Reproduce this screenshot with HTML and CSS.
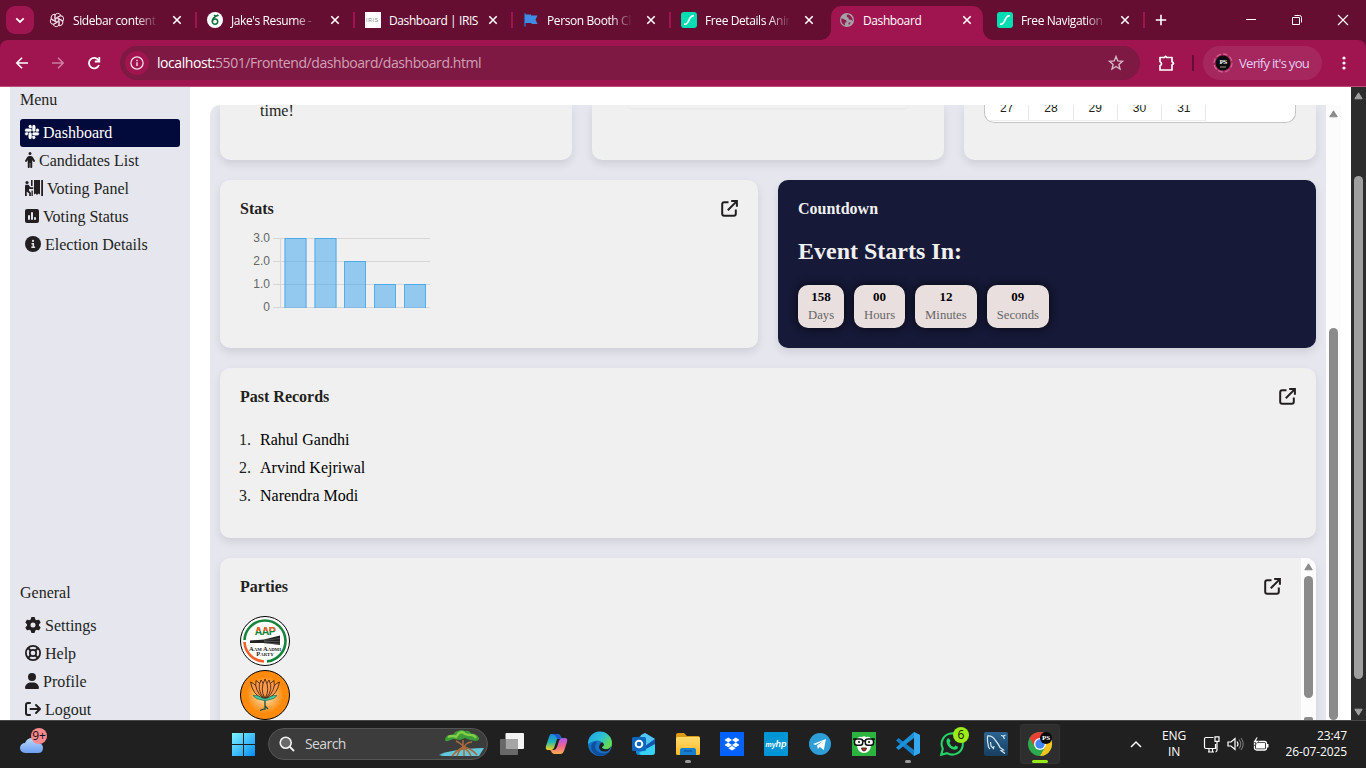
FILE: index.html
```html
<!DOCTYPE html>
<html lang="en">
<head>
<meta charset="utf-8">
<title>Dashboard</title>
<link rel="stylesheet" href="styles.css">
</head>
<body>
<svg class="defs" width="0" height="0">
  <defs>
    <symbol id="close" viewBox="0 0 10 10"><path d="M1.3 1.3l7.4 7.4M8.7 1.3L1.3 8.7" stroke="#fff" stroke-width="1.6"/></symbol>
    <symbol id="lottie" viewBox="0 0 16 16"><rect width="16" height="16" rx="3" fill="#00ddb3"/><path d="M3.8 12.2C9 12.2 7 3.8 12.2 3.8" fill="none" stroke="#fff" stroke-width="1.7" stroke-linecap="round"/></symbol>
    <symbol id="external" viewBox="0 0 17 17"><path d="M7.5 2.2H3.2Q1.2 2.2 1.2 4.2v9.6q0 2 2 2h9.6q2 0 2-2V9.5M10.2 1.1h5.7v5.7M15.6 1.4L6.8 10.2" fill="none" stroke="#231f20" stroke-width="2"/></symbol>
    <symbol id="up" viewBox="0 0 9 8"><path d="M4.5.8L8.2 6.8H.8z" fill="currentColor" stroke="currentColor" stroke-linejoin="round"/></symbol>
    <linearGradient id="win" x2="1" y2="1"><stop stop-color="#7ef4ff"/><stop offset="1" stop-color="#078cf8"/></linearGradient>
    <linearGradient id="cloud" x2="0" y2="1"><stop stop-color="#b9d8ff"/><stop offset="1" stop-color="#6c9fef"/></linearGradient>
    <linearGradient id="copA" x2="0" y2="1"><stop stop-color="#1787e8"/><stop offset=".5" stop-color="#23b6b0"/><stop offset="1" stop-color="#f6d41c"/></linearGradient>
    <linearGradient id="copB" x2="0" y2="1"><stop stop-color="#a85af0"/><stop offset=".5" stop-color="#ef6390"/><stop offset="1" stop-color="#ffab4b"/></linearGradient>
    <linearGradient id="edge" x2="1" y2=".6"><stop stop-color="#1c9fe8"/><stop offset=".55" stop-color="#2bc0d8"/><stop offset="1" stop-color="#66dc4c"/></linearGradient>
    <linearGradient id="fold" x2="0" y2="1"><stop stop-color="#ffdb6c"/><stop offset="1" stop-color="#fbb924"/></linearGradient>
    <linearGradient id="sql" x2="0" y2="1"><stop stop-color="#2b6492"/><stop offset="1" stop-color="#173f60"/></linearGradient>
    <radialGradient id="saffron"><stop offset=".2" stop-color="#ffd39b"/><stop offset=".75" stop-color="#ff8a0c"/></radialGradient>
  </defs>
</svg>

<header class="browser">
  <div class="tabstrip">
    <div class="tab-search"><svg width="10" height="7" viewBox="0 0 10 7"><path d="M1.3 1.4L5 5l3.7-3.6" fill="none" stroke="#fff" stroke-width="1.8"/></svg></div>
    <div class="tab">
      <svg class="fav" viewBox="0 0 16 16"><g fill="none" stroke="#eed9e2" stroke-width="1"><path id="petal" d="M6 9V4Q6.200 1.300 8.800 1.300Q10.900 1.400 11.800 3.300L8 5.700V7"/><use href="#petal" transform="rotate(60 8 8)"/><use href="#petal" transform="rotate(120 8 8)"/><use href="#petal" transform="rotate(180 8 8)"/><use href="#petal" transform="rotate(240 8 8)"/><use href="#petal" transform="rotate(300 8 8)"/></g></svg>
      <span class="title">Sidebar content</span><svg class="x"><use href="#close"/></svg>
    </div>
    <div class="tab">
      <svg class="fav" viewBox="0 0 16 16"><circle cx="8" cy="8" r="8" fill="#fff"/><circle cx="8" cy="9.600" r="2.700" fill="none" stroke="#13703c" stroke-width="1.500"/><path d="M5.400 9.500Q5.200 5.500 10.700 3.200M7 3.200Q9 4.800 11.500 3" fill="none" stroke="#13703c" stroke-width="1.600"/></svg>
      <span class="title">Jake's Resume -</span><svg class="x"><use href="#close"/></svg>
    </div>
    <div class="tab">
      <svg class="fav" viewBox="0 0 16 16"><path fill="#fff" d="M0 0h16v16H0z"/><text x="1" y="9.500" class="iris">IRIS</text></svg>
      <span class="title whole">Dashboard | IRIS</span><svg class="x"><use href="#close"/></svg>
    </div>
    <div class="tab">
      <svg class="fav" viewBox="0 0 16 16"><path d="M2 1.300V14.500" stroke="#3268b8" stroke-width="1.600"/><path d="M2 2.500h6v1h6.500l-2 4.300 2 4.200H8.500v-1H2z" fill="#408ce4"/></svg>
      <span class="title">Person Booth Cla</span><svg class="x"><use href="#close"/></svg>
    </div>
    <div class="tab">
      <svg class="fav"><use href="#lottie"/></svg>
      <span class="title">Free Details Anim</span><svg class="x"><use href="#close"/></svg>
    </div>
    <div class="tab active">
      <svg class="fav small" viewBox="0 0 16 16"><circle cx="8" cy="8" r="7.500" fill="#a6a0a8"/><path d="M2.200 6.200L6.500 8q1.500.8 1 2.500l-1.800.5v2.800Q2 12 1.800 8zM9 2l-1.500 1.500q0 1.800 2 1.800l.5 2.200 2.500.3 1.700 1.400Q14 4 9 2zM9.500 11l2.500-.5-2 3z" fill="#8f1a4b"/></svg>
      <span class="title whole">Dashboard</span><svg class="x"><use href="#close"/></svg>
    </div>
    <div class="tab">
      <svg class="fav"><use href="#lottie"/></svg>
      <span class="title">Free Navigation</span><svg class="x"><use href="#close"/></svg>
    </div>
    <svg class="newtab" width="12" height="12" viewBox="0 0 12 12"><path d="M6 .8v10.400M.8 6h10.400" stroke="#fff" stroke-width="1.600"/></svg>
    <div class="winctl">
      <svg width="12" height="12" viewBox="0 0 12 12"><path d="M1 5.500h10" stroke="#fff"/></svg>
      <svg width="12" height="12" viewBox="0 0 12 12"><path d="M1.500 3.500h7v7h-7zM3.500 1.500h5q2 0 2 2v5" fill="none" stroke="#fff"/></svg>
      <svg width="12" height="12" viewBox="0 0 12 12"><path d="M1 1l10 10M11 1L1 11" stroke="#fff" stroke-width="1.100"/></svg>
    </div>
  </div>
  <div class="toolbar">
    <svg class="nav" viewBox="0 0 16 16"><path d="M14 8H3M8 2.800L2.800 8 8 13.200" fill="none" stroke="#fff" stroke-width="1.600"/></svg>
    <svg class="nav dim" viewBox="0 0 16 16"><path d="M2 8h11M8 2.800L13.200 8 8 13.200" fill="none" stroke="#fff" stroke-width="1.600"/></svg>
    <svg class="nav" viewBox="0 0 16 16"><path d="M13 10a5.200 5.200 0 1 1-.4-4.600M13.300 2v4.500H8.800" fill="none" stroke="#fff" stroke-width="1.800"/></svg>
    <div class="omnibox">
      <div class="info"><svg width="14" height="14" viewBox="0 0 14 14"><circle cx="7" cy="7" r="6.100" fill="none" stroke="#f5dfe8" stroke-width="1.300"/><path d="M7 6.200V10M7 3.700v1.500" stroke="#f5dfe8" stroke-width="1.400"/></svg></div>
      <span class="url"><b>localhost:</b>5501/Frontend/dashboard/dashboard.html</span>
      <svg class="star" width="16" height="16" viewBox="0 0 16 16"><path d="M8 1.600l1.800 4.300 4.700.4-3.600 3.100 1.100 4.600L8 11.500l-4 2.500 1.100-4.600L1.500 6.300l4.700-.4z" fill="none" stroke="#d8b6c5" stroke-width="1.400"/></svg>
    </div>
    <svg class="puzzle" width="18" height="18" viewBox="0 0 18 18"><path d="M2 3.500h4.500q1-2.300 2.300 0H14v4.300q3 1.500 0 3V16H2v-4.200q3-2 0-4.200z" fill="none" stroke="#fff" stroke-width="1.700" stroke-linejoin="round"/></svg>
    <i class="tool-sep"></i>
    <div class="profile">
      <svg width="20" height="20" viewBox="0 0 20 20"><circle cx="10" cy="10" r="9" fill="none" stroke="#cf5f8e" stroke-width="1.300" stroke-dasharray="5 2"/><circle cx="10" cy="10" r="7.500" fill="#0b0b0b"/><text x="10" y="11" text-anchor="middle" class="ps">PS</text><path d="M7 14h6" stroke="#999"/></svg>
      <span>Verify it's you</span>
    </div>
    <svg class="dots" width="4" height="14" viewBox="0 0 4 14"><g fill="#fff"><circle cx="2" cy="2" r="1.600"/><circle cx="2" cy="7" r="1.600"/><circle cx="2" cy="12" r="1.600"/></g></svg>
  </div>
</header>

<div class="viewport">
  <nav class="sidebar">
    <div class="group">
      <h6>Menu</h6>
      <a class="item on"><svg width="14" height="16" viewBox="0 0 448 512"><path d="M94.12 315.1c0 25.9-21.16 47.06-47.06 47.06S0 341 0 315.1c0-25.9 21.16-47.06 47.06-47.06h47.06v47.06zm23.72 0c0-25.9 21.16-47.06 47.06-47.06s47.06 21.16 47.06 47.06v117.84c0 25.9-21.16 47.06-47.06 47.06s-47.06-21.16-47.06-47.06V315.1zm47.06-188.98c-25.9 0-47.06-21.16-47.06-47.06S139 32 164.9 32s47.06 21.16 47.06 47.06v47.06H164.9zm0 23.72c25.9 0 47.06 21.16 47.06 47.06s-21.16 47.06-47.06 47.06H47.06C21.16 243.96 0 222.8 0 196.9s21.16-47.06 47.06-47.06H164.9zm188.98 47.06c0-25.9 21.16-47.06 47.06-47.06 25.9 0 47.06 21.16 47.06 47.06s-21.16 47.06-47.06 47.06h-47.06V196.9zm-23.72 0c0 25.9-21.16 47.06-47.06 47.06-25.9 0-47.06-21.16-47.06-47.06V79.06c0-25.9 21.16-47.06 47.06-47.06 25.9 0 47.06 21.16 47.06 47.06V196.9zM283.1 385.88c25.9 0 47.06 21.16 47.06 47.06 0 25.9-21.16 47.06-47.06 47.06-25.9 0-47.06-21.16-47.06-47.06v-47.06h47.06zm0-23.72c-25.9 0-47.06-21.16-47.06-47.06 0-25.9 21.16-47.06 47.06-47.06h117.84c25.9 0 47.06 21.16 47.06 47.06 0 25.9-21.16 47.06-47.06 47.06H283.1z" stroke="#fff" stroke-width="10"/></svg>Dashboard</a>
      <a class="item"><svg width="10" height="16" viewBox="0 0 320 512"><path d="M112 48a48 48 0 1 1 96 0 48 48 0 1 1 -96 0zm40 304l0 128c0 17.700-14.300 32-32 32s-32-14.300-32-32l0-223.100L59.400 304.500c-9.100 15.100-28.800 20-43.900 10.900s-20-28.800-10.900-43.900l58.300-97c17.400-28.900 48.600-46.600 82.300-46.600l29.700 0c33.700 0 64.900 17.700 82.300 46.600l58.300 97c9.100 15.100 4.200 34.800-10.900 43.900s-34.800 4.200-43.900-10.900L232 256.900 232 480c0 17.700-14.300 32-32 32s-32-14.300-32-32l0-128-16 0z"/></svg>Candidates List</a>
      <a class="item"><svg width="18" height="16" viewBox="0 0 18 16"><circle cx="2" cy="2.500" r="1.600"/><path d="M.5 4.800h3l1.800 2.500h3v1.800H4.500L4 8.500v2.300l1.900 1.900V16H4.200v-2.500L1.700 11.500 1.800 16H0V6zM6 0h1.600v6H6zM6.500 10.500h1.300V16H6.500zM9 0h6v14.500l-1.500-1-1.500 1.500-1.500-1.500L9 14.500zM16.200 0H18v16h-1.800z"/></svg>Voting Panel</a>
      <a class="item"><svg width="14" height="16" viewBox="0 0 448 512"><path fill-rule="evenodd" d="M64 32h320q64 0 64 64v320q0 64-64 64H64q-64 0-64-64V96Q0 32 64 32zM96 256v96q0 32 32 32t32-32v-96q0-32-32-32t-32 32zm96-96v192q0 32 32 32t32-32V160q0-32-32-32t-32 32zm96 160v32q0 32 32 32t32-32v-32q0-32-32-32t-32 32z"/></svg>Voting Status</a>
      <a class="item"><svg width="16" height="16" viewBox="0 0 16 16"><circle cx="8" cy="8" r="8"/><circle cx="8" cy="4.900" r="1.100" fill="#e6e6ef"/><path d="M6.500 7.700H8.300v3.600M6.300 11.300h3.800" fill="none" stroke="#e6e6ef" stroke-width="1.500"/></svg>Election Details</a>
    </div>
    <div class="group">
      <h6>General</h6>
      <a class="item"><svg width="16" height="16" viewBox="0 0 512 512"><path d="M495.900 166.600c3.200 8.700 .5 18.400-6.400 24.600l-43.300 39.400c1.100 8.300 1.700 16.800 1.700 25.400s-.6 17.100-1.700 25.400l43.300 39.400c6.900 6.200 9.600 15.900 6.400 24.600c-4.400 11.900-9.700 23.300-15.800 34.300l-4.700 8.100c-6.600 11-14 21.400-22.100 31.200c-5.900 7.200-15.700 9.600-24.500 6.800l-55.700-17.700c-13.400 10.300-28.200 18.900-44 25.400l-12.500 57.100c-2 9.100-9 16.300-18.200 17.800c-13.800 2.300-28 3.500-42.500 3.500s-28.700-1.200-42.500-3.500c-9.200-1.500-16.200-8.700-18.200-17.800l-12.500-57.100c-15.800-6.500-30.600-15.100-44-25.400L83.100 425.900c-8.800 2.800-18.600 .3-24.500-6.800c-8.100-9.800-15.500-20.200-22.100-31.200l-4.700-8.100c-6.100-11-11.400-22.400-15.800-34.300c-3.200-8.700-.5-18.400 6.400-24.600l43.300-39.400C64.600 273.100 64 264.600 64 256s.6-17.100 1.700-25.400L22.400 191.200c-6.900-6.200-9.600-15.900-6.400-24.600c4.400-11.900 9.700-23.300 15.800-34.300l4.700-8.100c6.600-11 14-21.400 22.100-31.200c5.900-7.200 15.700-9.600 24.500-6.800l55.700 17.700c13.400-10.300 28.200-18.900 44-25.400l12.500-57.100c2-9.100 9-16.300 18.200-17.800C227.300 1.200 241.500 0 256 0s28.700 1.200 42.500 3.500c9.200 1.500 16.200 8.700 18.200 17.800l12.500 57.100c15.800 6.500 30.600 15.100 44 25.400l55.700-17.700c8.800-2.800 18.600-.3 24.500 6.800c8.100 9.800 15.500 20.200 22.100 31.200l4.700 8.100c6.100 11 11.400 22.400 15.800 34.300zM256 336a80 80 0 1 0 0-160 80 80 0 1 0 0 160z"/></svg>Settings</a>
      <a class="item"><svg width="16" height="16" viewBox="0 0 16 16"><g fill="none" stroke="#231f20"><circle cx="8" cy="8" r="7.100" stroke-width="1.800"/><circle cx="8" cy="8" r="3.200" stroke-width="1.700"/><path d="M2.900 2.900l2.900 2.900M13.100 2.900l-2.900 2.900M2.900 13.100l2.900-2.900M13.100 13.100l-2.900-2.900" stroke-width="2"/></g></svg>Help</a>
      <a class="item"><svg width="14" height="16" viewBox="0 0 448 512"><path d="M224 256A128 128 0 1 0 224 0a128 128 0 1 0 0 256zm-45.700 48C79.800 304 0 383.800 0 482.300C0 498.700 13.300 512 29.700 512l388.600 0c16.400 0 29.700-13.300 29.700-29.700C448 383.800 368.200 304 269.700 304l-91.400 0z"/></svg>Profile</a>
      <a class="item"><svg width="16" height="16" viewBox="0 0 16 16"><path d="M5 2H3Q1 2 1 4v8q0 2 2 2h2M5.500 8h9M11 4l4 4-4 4" fill="none" stroke="#231f20" stroke-width="2" stroke-linecap="round" stroke-linejoin="round"/></svg>Logout</a>
    </div>
  </nav>

  <div class="shell">
    <main class="content">
      <div class="row top">
        <section class="card"><span class="remark">time!</span></section>
        <section class="card"><div class="slip"></div></section>
        <section class="card"><div class="calendar"><span>27</span><span>28</span><span>29</span><span>30</span><span>31</span></div></section>
      </div>
      <div class="row mid">
        <section class="card">
          <div class="head"><h4>Stats</h4><svg class="ext"><use href="#external"/></svg></div>
          <svg class="chart" width="200" height="90" viewBox="240 228 200 90">
            <path d="M273 238.500h157M273 261.500h157M273 284.500h157M273 307.500h157M280.500 238v69" stroke="#d6d6d6"/>
            <g fill="#36a2eb" fill-opacity=".5"><path d="M284.500 238h22v70h-22zM314.500 238h22v70h-22zM344 261h22v47h-22zM374 284h22v24h-22zM404 284h22v24h-22z"/></g>
            <path d="M285 308V238.500h21V308M315 308V238.500h21V308M344.500 308V261.500h21V308M374.500 308V284.500h21V308M404.500 308V284.500h21V308" fill="none" stroke="#36a2eb" stroke-opacity=".7"/>
            <g class="ticks"><text x="270" y="242">3.0</text><text x="270" y="265">2.0</text><text x="270" y="288">1.0</text><text x="270" y="311">0</text></g>
          </svg>
        </section>
        <section class="card dark">
          <div class="head"><h4>Countdown</h4></div>
          <h2>Event Starts In:</h2>
          <div class="timer">
            <div><b>158</b><span>Days</span></div><div><b>00</b><span>Hours</span></div><div><b>12</b><span>Minutes</span></div><div><b>09</b><span>Seconds</span></div>
          </div>
        </section>
      </div>
      <section class="card records">
        <div class="head"><h4>Past Records</h4><svg class="ext"><use href="#external"/></svg></div>
        <ol><li>Rahul Gandhi</li><li>Arvind Kejriwal</li><li>Narendra Modi</li></ol>
      </section>
      <section class="card parties">
        <div class="parties-body">
          <div class="head"><h4>Parties</h4><svg class="ext"><use href="#external"/></svg></div>
          <svg class="logo" viewBox="0 0 50 50"><circle cx="25" cy="25" r="24.500" fill="#fff" stroke="#000"/><g fill="none" stroke-width="2.600"><path d="M4.500 24A20.500 20.500 0 1 1 27 45.400" stroke="#16843c"/><path d="M4.500 26A20.500 20.500 0 0 0 24 45.500" stroke="#f2602b"/></g><text x="25" y="18.500" text-anchor="middle" class="aap" fill="#16843c">AAP</text><text x="25" y="18.500" text-anchor="middle" class="aap aap-top" fill="#f2602b">AAP</text><path d="M10 24.500l14-1 16-4v9.500l-16-2L10 27z" fill="#222"/><path d="M24 24.500l16-2M24 25.500h16M24 27l16 1" stroke="#777" stroke-width=".5"/><text x="25" y="35" text-anchor="middle" class="aap-sub">A<tspan class="sc">AM</tspan> A<tspan class="sc">ADMI</tspan></text><text x="25" y="40" text-anchor="middle" class="aap-sub">P<tspan class="sc">ARTY</tspan></text></svg>
          <svg class="logo" viewBox="0 0 50 50"><circle cx="25" cy="25" r="24.500" fill="url(#saffron)" stroke="#000"/><path d="M25 30v9q-2 0-5 1.500M25 36l3 3" fill="none" stroke="#234b3c" stroke-width="1.300"/><g fill="#ff9a4c" stroke="#4a2412" stroke-width=".9" stroke-linejoin="round"><path d="M22 28Q13 25 10.500 12q6 2 12 14zM28 28q9-3 11.500-16-6 2-12 14z"/><path d="M23 28Q14 20 16 10.500q7 4 9 16zM27 28q9-8 7-17.500-7 4-9 16z"/><path d="M24 28.500Q16 19 21 10q5 6 5 17zM26 28.500Q34 19 29 10q-5 6-5 17z"/><path d="M25 28.500Q19.500 19 25 9q5.500 10 0 19.500z"/></g><path d="M13 25.500q5-.5 7.500 1.500Q25 30.500 29.500 27q2.500-2 7.500-1.500-3 4-7 4-5 2.500-10 0-4 0-7-4z" fill="#42c69b" stroke="#1b5c4a" stroke-width=".6"/></svg>
        </div>
        <div class="scroll"><svg width="9" height="8"><use href="#up"/></svg><i class="thumb"></i><i class="downcap"></i></div>
      </section>
    </main>
    <div class="scroll inner"><svg width="9" height="8"><use href="#up"/></svg><i class="thumb"></i></div>
  </div>

  <div class="scroll page"><svg width="9" height="8"><use href="#up"/></svg><i class="thumb"></i><svg class="flip" width="9" height="8"><use href="#up"/></svg></div>
</div>

<footer class="taskbar">
  <svg class="weather" width="30" height="28" viewBox="0 0 30 28"><path d="M6 25a5 5 0 0 1 0-10q2-5 7-5 6 0 7 5 4 1 4 5 0 5-5 5z" fill="url(#cloud)"/><circle cx="20" cy="8" r="8" fill="#f8888d"/><text x="20" y="12" text-anchor="middle" class="badge">9+</text></svg>
  <svg class="start" width="23" height="23" viewBox="0 0 23 23"><path fill="url(#win)" d="M0 0h11v11H0zM12 0h11v11H12zM0 12h11v11H0zM12 12h11v11H12z"/></svg>
  <div class="search">
    <svg width="16" height="16" viewBox="0 0 16 16"><circle cx="6.700" cy="6.700" r="5.500" fill="#696969" stroke="#f2f2f2" stroke-width="1.600"/><path d="M10.700 10.700L15 15" stroke="#f2f2f2" stroke-width="1.900"/></svg>
    <span>Search</span>
    <svg class="tree" width="46" height="28" viewBox="0 0 46 28"><path d="M0 25q12-6 45-7l-5 8H4z" fill="#63c8dc"/><path d="M24 20q2-5-7-9M24 20q2-8 9-8M24 10v9M24 17q-7 4-11 9M23 18q-4 4-5 8M25 18v8M25 18q5 3 7 8M26 17q8 3 12 8" fill="none" stroke="#a86b3c" stroke-width="1.500"/><path d="M6 9Q8 4 14 5q2-4 5-4 3-2 7 0 5-1 6 3 5-1 8 4 1 2-3 3l-6-1-5-2-5 2-7-1-5 2q-3 1-3-2z" fill="#3d9c37"/><path d="M9 7q5-2 8 0l3-4q4-2 6 1l4 1q5-1 7 3" fill="none" stroke="#83cf46" stroke-width="2.300"/></svg>
  </div>
  <div class="apps">
    <div><svg viewBox="0 0 24 24"><rect x="5.500" y="1" width="18.500" height="16" rx="1" fill="#f4f4f4"/><rect x="0" y="7" width="18" height="16" rx="1" fill="#6e6e6e" fill-opacity=".93"/><path d="M6 7h12v10H6z" fill="#a5a5a5"/></svg></div>
    <div><svg viewBox="0 0 24 24"><path d="M7 2h7q2 0 3 3l1 2h-5l-3 9q-1 2-3 2H4q-3 0-2-4l3-9q1-3 2-3z" fill="url(#copA)"/><path d="M17 22h-7q-2 0-3-3l-1-1h4q2 0 3-3l2-6q1-3 4-3h2q3 0 2 4l-3 9q-1 3-3 3z" fill="url(#copB)"/><path d="M8 2h6q2 0 3 5h-4q-1-4-5-5z" fill="#2158c9"/></svg></div>
    <div><svg viewBox="0 0 24 24"><circle cx="12" cy="12" r="12" fill="#1672c4"/><path d="M0 12A12 12 0 0 1 24 11q0 6-6 6-5 0-4-3 1-3-2-5-5-2-12 3z" fill="url(#edge)"/><path d="M9 10q-4 5 0 9 5 4 12 1-3 4-9 4Q3 22 3 14q2-5 6-4z" fill="#124e9e"/><path d="M14 10q4 3 0 5 0 3 6 2 2-1 3-3-1 4-3 5-8 2-9-4 0-3 3-5z" fill="#202020"/></svg></div>
    <div><svg viewBox="0 0 24 24"><path d="M4 7l9-6 10 6v13q0 3-3 3H7q-3 0-3-3z" fill="#1688d9"/><path d="M9 3l4-2 10 6-10 7-6-4z" fill="#51c5f3"/><path d="M23 7L12 15l11 7z" fill="#1155af"/><path d="M7 21l16-9v8q0 3-3 3H9z" fill="#39d0f5"/><rect x="0" y="5" width="14" height="14" rx="1.500" fill="#0c67bf"/><circle cx="7" cy="12" r="3.300" fill="none" stroke="#fff" stroke-width="2"/></svg></div>
    <div class="run"><svg viewBox="0 0 24 24"><path d="M0 3q0-2 2-2h6l3 3h11q2 0 2 2v3H0z" fill="#de9a13"/><rect y="5" width="24" height="18" rx="1.500" fill="url(#fold)"/><path d="M4 23v-5q0-2 2-2h12q2 0 2 2v5z" fill="#147fd1"/><path d="M8 19h8" stroke="#0c5ba5" stroke-width="1.500"/></svg></div>
    <div><svg viewBox="0 0 24 24"><path fill="#0062ff" d="M0 0h24v24H0z"/><path fill="#fff" d="M8.200 5.500L12 8 8.200 10.400 4.500 8zM15.800 5.500L19.500 8l-3.700 2.400L12 8zM8.200 10.500l3.800 2.400-3.800 2.400-3.700-2.400zM15.800 10.500l3.700 2.400-3.700 2.400-3.800-2.400zM12 13.800l3.700 2.400L12 18.600l-3.700-2.400z"/></svg></div>
    <div><svg viewBox="0 0 24 24"><rect width="24" height="24" rx="1" fill="#0096d6"/><text x="12" y="15" text-anchor="middle" class="myhp">my<tspan class="hp">hp</tspan></text></svg></div>
    <div><svg viewBox="0 0 24 24"><circle cx="12" cy="12" r="11" fill="#2d9ed6"/><path d="M5 12l13-5-2.200 11-4-3-2 2-.8-3.500 6-4.500-7.500 4z" fill="#fff"/></svg></div>
    <div><svg viewBox="0 0 24 24"><path fill="#2bb43f" d="M0 0h24v24H0z"/><path d="M5 7q2-3 5-2l2-1 2 1q4-1 5 2v7q-1 7-7 7t-7-7z" fill="#fff"/><g fill="#fff" stroke="#111" stroke-width="1.500"><rect x="2.500" y="7" width="8.200" height="6.300" rx="2.500"/><rect x="13.300" y="7" width="8.200" height="6.300" rx="2.500"/><path d="M10.500 9h3M1 7h3M20 7h3" fill="none"/></g><circle cx="7" cy="10" r="1" fill="#111"/><circle cx="17" cy="10" r="1" fill="#111"/><path d="M9.500 16h5q-.5 3-2.500 3t-2.500-3z" fill="#d52c26" stroke="#111" stroke-width=".8"/></svg></div>
    <div class="run"><svg viewBox="0 0 24 24"><path d="M18 0l6 3v18l-6 3L0 8.500 2.500 6 18 18z" fill="#147fc8"/><path d="M18 0v6L2.500 18 0 15.500z" fill="#1b91dc"/><path d="M18 0l6 3v18l-6 3z" fill="#35a7f0"/></svg></div>
    <div><svg viewBox="0 0 24 24"><path d="M1.200 22.800l1.600-6A10.600 10.600 0 1 1 7 21.200z" fill="#202020" stroke="#25d366" stroke-width="2.100"/><path d="M7 7q2-2 3 1l.5 1-1 2q1 3 4.500 4l1.500-1.500 2.500 1.300q0 3-3.500 3Q8 17 6.500 10 6.400 8 7 7z" fill="#25d366"/><circle cx="21" cy="3" r="8" fill="#9bec18"/><text x="21" y="7.300" text-anchor="middle" class="badge">6</text></svg></div>
    <div><svg viewBox="0 0 24 24"><rect width="24" height="24" rx="2" fill="url(#sql)"/><path d="M6 17l-1.500-2Q3 9 3.500 4q5-.5 8 4.500 3 3.500 4.500 7l3.500 2.500-2.500.5 4 3M6.500 10l.5 4 2.500 2.500L10 14M17 3.500l2 .5 1.500 3M21.500 3L19 4.500" fill="none" stroke="#d7e7f0" stroke-width="1.200"/></svg></div>
    <div class="current"><svg viewBox="0 0 24 24"><circle cx="12" cy="12" r="12" fill="#2da94f"/><path d="M1.600 6A12 12 0 0 1 22.400 6H12L7 15z" fill="#e94235"/><path d="M12 6h10.400A12 12 0 0 1 12 24l5.200-9z" fill="#fcc31e"/><circle cx="12" cy="12" r="6" fill="#fff"/><circle cx="12" cy="12" r="4.700" fill="#4285f4"/><circle cx="18" cy="6" r="6" fill="#080808"/><text x="18" y="7.500" text-anchor="middle" class="ps">PS</text></svg></div>
  </div>
  <div class="tray">
    <svg class="caret" width="12" height="8" viewBox="0 0 12 8"><path d="M1 7l5-5 5 5" fill="none" stroke="#fff" stroke-width="1.500"/></svg>
    <div class="lang">ENG<br>IN</div>
    <svg class="net" width="17" height="17" viewBox="0 0 17 17"><path d="M10.500 1.500H3q-1.500 0-1.500 1.500v8q0 1.500 1.500 1.500h9.500V8M5 16h6M6 12.500v3.500M9.500 12.500v3.500M12 .8h4v4.500h-4zM14 5.500V14q0 1.500-1.500 2" fill="none" stroke="#fff" stroke-width="1.200"/></svg>
    <svg class="vol" width="17" height="14" viewBox="0 0 17 14"><path d="M1 5h3l4-3.500v11L4 9H1z" fill="none" stroke="#fff" stroke-width="1.200"/><path d="M10 4.500q2 2.500 0 5" fill="none" stroke="#fff" stroke-width="1.200"/><path d="M12 2.500q3.500 4.500 0 9M14 1q4.500 6 0 12" fill="none" stroke="#777" stroke-width="1.100"/></svg>
    <svg class="bat" width="18" height="15" viewBox="0 0 18 15"><rect x="2.500" y="4.500" width="12" height="8.500" rx="2" fill="none" stroke="#fff" stroke-width="1.300"/><rect x="4" y="6" width="9" height="5.500" fill="#fff"/><path d="M15.500 7v3.500" stroke="#fff" stroke-width="2"/><path d="M4.500 0L1 5.500h3L2.500 9l5-5.500H4.500L6 0z" fill="#fff" stroke="#202020" stroke-width=".6"/></svg>
    <div class="clock">23:47<br>26-07-2025</div>
  </div>
</footer>
</body>
</html>
```
FILE: styles.css
```css
* { box-sizing: border-box; }
html, body { height: 100%; margin: 0; overflow: hidden; }
body { display: flex; flex-direction: column; width: 1366px; height: 768px; background: #fff; color: #231f20; font: 16px/18px "Liberation Serif", "Times New Roman", serif; }
svg { display: block; flex: none; overflow: visible; }
.defs { position: absolute; }
h2, h4, h6, ol { margin: 0; padding: 0; }

/* Browser frame */
.browser { flex: none; height: 87px; background: #650e32; color: #fff; font-family: "Open Sans", sans-serif; }
.tabstrip { display: flex; height: 40px; padding-left: 6px; align-items: center; }
.tab-search { display: flex; align-items: center; justify-content: center; width: 28px; height: 28px; margin-right: 4px; border-radius: 9px; background: #a0154f; }
.tab { position: relative; display: flex; align-items: center; flex: none; width: 158px; height: 40px; padding-left: 11px; font-size: 12px; }
.tab::after { content: ""; position: absolute; right: -1px; top: 12px; width: 2px; height: 16px; background: #a0154f; }
.tab:nth-child(6)::after { display: none; }
.fav { width: 16px; height: 16px; }
.title { width: 90px; margin: 0 10px 0 7px; padding: 2px 0 0 1px; white-space: nowrap; letter-spacing: -.4px; -webkit-mask-image: linear-gradient(90deg, #000 72%, transparent 96%); mask-image: linear-gradient(90deg, #000 72%, transparent 96%); }
.title.whole { -webkit-mask-image: none; mask-image: none; }
.x { width: 10px; height: 10px; }
.active > * { z-index: 1; }
.active { z-index: 1; }
.active::before { content: ""; position: absolute; left: 3px; right: 3px; top: 6px; bottom: 0; border-radius: 10px 10px 0 0; background: #a0154f; z-index: 0; }
.active::after { top: auto; bottom: 0; left: -7px; right: -7px; width: auto; height: 10px; background: radial-gradient(circle at 0 0, transparent 9.500px, #a0154f 10px) left / 10px 10px no-repeat, radial-gradient(circle at 100% 0, transparent 9.500px, #a0154f 10px) right / 10px 10px no-repeat; }
.fav.small { transform: scale(.94); }
.newtab { margin-left: 11px; }
.winctl { display: flex; gap: 34px; margin-left: auto; margin-right: 17px; }
.iris { font: 5px "Liberation Sans", sans-serif; letter-spacing: .8px; fill: #888; }
.ps { font: bold 7px "Liberation Serif", serif; fill: #fff; }
.toolbar { display: flex; align-items: center; height: 47px; padding: 0 0 1px 14px; border-bottom: 1px solid #bd4e7b; border-radius: 8px 8px 0 0; background: #a0154f; }
.nav { width: 16px; height: 16px; margin-right: 20px; }
.dim { opacity: .45; }
.omnibox { display: flex; align-items: center; width: 1020px; height: 34px; margin-left: -2px; padding-left: 5px; border-radius: 17px; background: #7d1943; }
.info { display: flex; align-items: center; justify-content: center; width: 24px; height: 24px; border-radius: 50%; background: #a0154f; }
.url { margin-left: 8px; color: #d3a0b6; font-size: 14px; letter-spacing: -.43px; white-space: nowrap; }
.url b { color: #fff; font-weight: 400; }
.star { margin-left: auto; margin-right: 16px; }
.puzzle { margin-left: 18px; }
.tool-sep { width: 2px; height: 16px; margin: 0 10px 0 16px; background: #650e32; }
.profile { display: flex; align-items: center; gap: 6px; width: 119px; height: 34px; margin-left: -1px; padding-left: 10px; border-radius: 17px; background: #a5275d; color: #e4cdf1; font-size: 13px; letter-spacing: -.7px; white-space: nowrap; }
.dots { margin-left: 20px; }

/* Page area */
.viewport { display: flex; height: 633px; flex: none; padding-left: 10px; overflow: hidden; }
.sidebar { display: flex; flex-direction: column; justify-content: space-between; flex: none; width: 180px; height: 637px; padding: 4px 10px 0; background: #e6e6ef; }
h6 { margin-bottom: 10px; font-size: 16px; font-weight: 400; line-height: 18px; }
.item { display: flex; align-items: center; gap: 4px; height: 28px; padding-left: 5px; border-radius: 3px; white-space: nowrap; }
.item svg { fill: #231f20; margin-top: -2px; }
.on { background: #020a3b; color: #fff; }
.on svg { fill: #fff; }
.shell { display: flex; flex: none; width: 1131px; height: 615px; margin: 18px 0 0 20px; border-radius: 10px 0 0; overflow: hidden; background: #e6e6ef; }
.content { display: flex; flex-direction: column; gap: 20px; flex: none; width: 1116px; padding: 0 10px; overflow: hidden; }
.row { display: flex; gap: 20px; flex: none; }
.card { flex: 1; padding: 20px; border-radius: 10px; background: #f0f0f0; box-shadow: 0 4px 8px rgba(0, 0, 0, .1); }
.top { height: 55px; }
.top .card { padding: 0 20px; border-radius: 0 0 10px 10px; }
.remark { display: block; margin: -3px 0 0 20px; }
.slip { height: 3px; margin: 0 16px; border-radius: 0 0 8px 8px; background: #f1f1f1; box-shadow: 0 1px 3px rgba(0, 0, 0, .04); }
.calendar { display: flex; height: 18px; border: 1px solid #c6c6c6; border-top: 0; border-radius: 0 0 10px 10px; overflow: hidden; background: #fff; font: 12px/7px "Liberation Sans", sans-serif; }
.calendar span { width: 44.300px; height: 16px; border-right: 1px solid #e7e7e7; border-bottom: 1px solid #eee; text-align: center; }
.mid { height: 168px; }
.head { display: flex; justify-content: space-between; height: 18px; }
h4 { font-size: 16px; line-height: 18px; }
.ext { width: 17px; height: 17px; margin-top: -.5px; }
.chart { margin-top: 10px; }
.ticks { font: 12px "Liberation Sans", sans-serif; fill: #666; text-anchor: end; }
.card.dark { background: #161937; color: #f0f0f0; }
h2 { margin-top: 19px; font-size: 24px; line-height: 28px; }
.timer { display: flex; gap: 10px; margin-top: 20px; }
.timer div { display: flex; flex-direction: column; align-items: center; height: 43px; padding: 3px 10px; border-radius: 10px; background: #e9dfdf; box-shadow: 0 0 10px rgba(0, 0, 0, .75); color: #000; font-size: 13px; }
.timer span { color: #666; font-size: 12.700px; }
.card.records { flex: none; height: 170px; }
ol { margin-top: 20px; list-style: none; counter-reset: rec; }
li { display: flex; height: 28px; line-height: 28px; color: #000; counter-increment: rec; }
li::before { content: counter(rec) "."; width: 20px; margin-left: -1px; margin-right: 1px; color: #231f20; }
.card.parties { display: flex; flex: none; height: 220px; padding: 0; overflow: hidden; }
.parties-body { flex: 1; padding: 20px; }
.logo { width: 50px; height: 50px; margin-bottom: 4px; }
.head + .logo { margin-top: 20px; }
.aap { font: bold 10.500px "Liberation Sans", sans-serif; letter-spacing: -.6px; }
.aap-top { clip-path: inset(0 0 45% 0); }
.aap-sub { font: bold 6.500px "Liberation Serif", serif; fill: #222; }
.sc { font-size: 4.800px; }

/* Scrollbars */
.scroll { display: flex; flex-direction: column; align-items: center; flex: none; width: 15px; padding-top: 5px; background: #fcfcfc; color: #8b8b8b; }
.thumb { flex: none; width: 9px; border-radius: 5px; background: #8b8b8b; }
.parties .thumb { height: 122px; margin-top: 5px; }
.downcap { width: 9px; height: 5px; margin-top: 19px; border-radius: 2px; background: #8b8b8b; }
.inner .thumb { height: 392px; margin-top: 210px; }
.page { margin-left: auto; background: #2c2c2c; color: #9f9f9f; }
.page .thumb { height: 503px; margin-top: 76px; background: #9f9f9f; }
.flip { margin-top: 29px; transform: rotate(180deg); }

/* Taskbar */
.taskbar { display: flex; align-items: center; flex: none; height: 48px; padding: 0 0 1px 19px; border-top: 1px solid #464848; background: #202020; color: #fff; font-family: "Open Sans", sans-serif; }
.weather { margin: -5px 183px 0 0; }
.badge { font: 12px "Open Sans", sans-serif; fill: #111; }
.search { display: flex; align-items: center; width: 220px; height: 32px; margin-left: 13px; padding-left: 10px; border: 1px solid #555; border-radius: 16px; background: #3c3c3c; color: #d6d6d6; font-size: 14px; letter-spacing: -.6px; }
.search span { margin-left: 10px; }
.tree { margin-left: auto; margin-right: 2px; }
.apps { display: flex; margin-left: 4px; }
.apps div { position: relative; display: flex; align-items: center; justify-content: center; width: 40px; height: 40px; margin-right: 4px; border-radius: 4px; }
.apps svg { width: 24px; height: 24px; }
.run::after, .current::after { content: ""; position: absolute; bottom: 1px; width: 6px; height: 3px; border-radius: 2px; background: #9b9b9b; }
.current { background: #2e2e2e; box-shadow: 0 0 0 1px #343434 inset; }
.current::after { width: 16px; background: #97e817; }
.myhp { font: italic bold 7px "Liberation Sans", sans-serif; fill: #fff; }
.hp { font-size: 9px; }
.tray { display: flex; align-items: center; margin-left: auto; padding-right: 19px; font-size: 12px; line-height: 16px; letter-spacing: -.1px; }
.lang { width: 30px; margin: 0 14px 0 17px; text-align: center; }
.vol { margin: 0 8px 0 7px; }
.clock { width: 77px; text-align: right; white-space: nowrap; }
```
